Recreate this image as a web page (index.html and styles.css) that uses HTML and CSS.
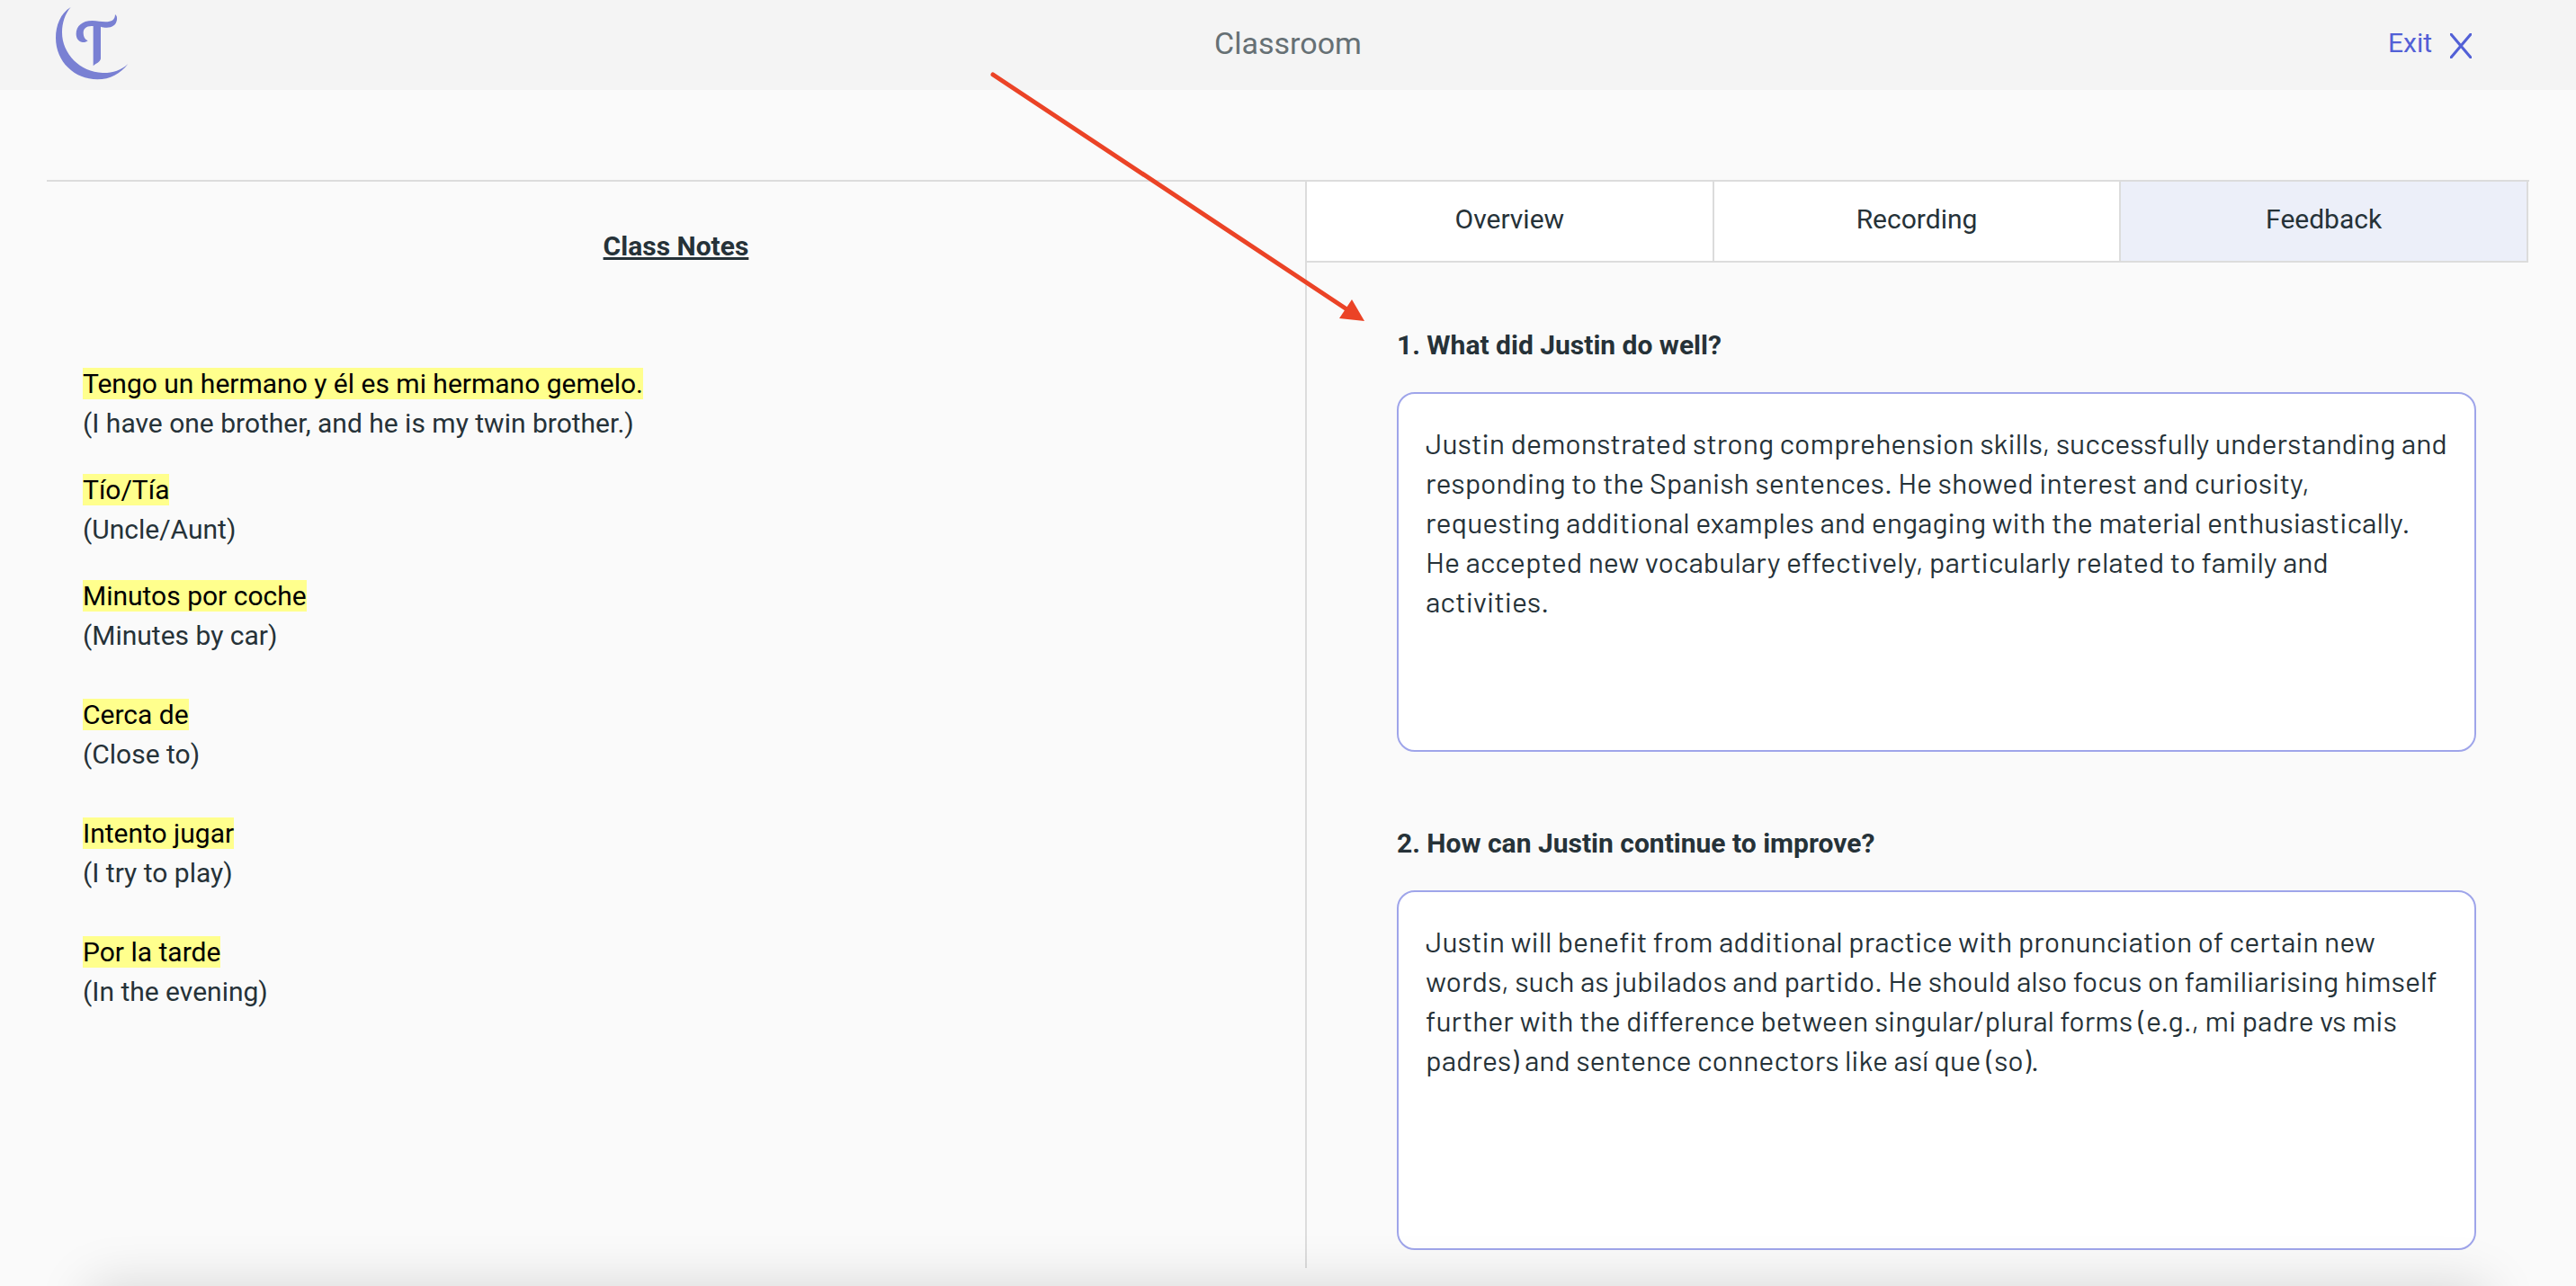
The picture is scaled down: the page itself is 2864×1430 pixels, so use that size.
FILE: index.html
```html
<!DOCTYPE html>
<html lang="en">
<head>
<meta charset="utf-8">
<meta name="viewport" content="width=device-width, initial-scale=1">
<title>Classroom</title>
<link rel="stylesheet" href="styles.css">
</head>
<body>
<header class="topbar">
  <a class="brand" href="#" aria-label="Home">
    <svg class="brand-logo" viewBox="0 0 420 300" aria-hidden="true">
      <path d="M116 24C82 44 66 85 66 127C66 206 129 265 205 265C247 265 282 246 307 213C284 236 252 244 222 243C148 240 87 180 87 108C87 76 97 46 116 24Z"/>
      <path d="M191 220V87C168 85 158 95 158 110C158 122 163 131 173 136C166 142 158 142 152 140C140 136 134 126 134 113C134 88 153 69 188 69C205 69 216 73 232 73C252 73 264 66 264 48C270 52 271 59 270 66C267 84 254 92 236 92C228 92 222 91 216 89V196C214 208 200 211 191 220Z"/>
    </svg>
  </a>
  <h1 class="topbar-title">Classroom</h1>
  <a class="exit" href="#">Exit
    <svg class="exit-icon" viewBox="0 0 24 28" aria-hidden="true"><path d="M1 1L23 27M23 1L1 27"/></svg>
  </a>
</header>

<main class="classroom">
  <section class="notes">
    <h2 class="notes-title">Class Notes</h2>
    <div class="notes-body">
      <p class="note"><mark>Tengo un hermano y él es mi hermano gemelo.</mark><br>(I have one brother, and he is my twin brother.)</p>
      <p class="note"><mark>Tío/Tía</mark><br>(Uncle/Aunt)</p>
      <p class="note"><mark>Minutos por coche</mark><br>(Minutes by car)<br><br><mark>Cerca de</mark><br>(Close to)<br><br><mark>Intento jugar</mark><br>(I try to play)<br><br><mark>Por la tarde</mark><br>(In the evening)</p>
    </div>
  </section>

  <section class="panel">
    <nav class="tabs">
      <button class="tab" type="button">Overview</button>
      <button class="tab" type="button">Recording</button>
      <button class="tab tab-active" type="button">Feedback</button>
    </nav>
    <form class="feedback">
      <div class="question">
        <label for="did-well">1. What did Justin do well?</label>
        <textarea id="did-well">Justin demonstrated strong comprehension skills, successfully understanding and responding to the Spanish sentences. He showed interest and curiosity, requesting additional examples and engaging with the material enthusiastically. He accepted new vocabulary effectively, particularly related to family and activities.</textarea>
      </div>
      <div class="question">
        <label for="improve">2. How can Justin continue to improve?</label>
        <textarea id="improve">Justin will benefit from additional practice with pronunciation of certain new words, such as jubilados and partido. He should also focus on familiarising himself further with the difference between singular/plural forms (e.g., mi padre vs mis padres) and sentence connectors like así que (so).</textarea>
      </div>
    </form>
  </section>
</main>

<svg class="pointer" viewBox="0 0 424 284" aria-hidden="true">
  <path class="pointer-line" d="M7 8L402 270"/>
  <path class="pointer-head" d="M420 282L406 258L392 279Z"/>
</svg>
<div class="bottom-shade"></div>
</body>
</html>
```
FILE: styles.css
```css
* { box-sizing: border-box; }

body {
  margin: 0;
  background: #fafafa;
  color: #263238;
  font-family: Roboto, "Liberation Sans", sans-serif;
  font-size: 30px;
  line-height: 44px;
}

.topbar {
  display: grid;
  grid-template-columns: 1fr auto 1fr;
  align-items: center;
  height: 100px;
  padding: 0 116px 0 40px;
  background: #f4f4f4;
}

.brand { width: 140px; height: 100px; }
.brand-logo { display: block; width: 140px; height: 100px; fill: #7980d3; }

.topbar-title {
  margin: 0 0 4px 76px;
  color: #667074;
  font-size: 34px;
  font-weight: 400;
}

.exit {
  display: flex;
  align-items: center;
  justify-self: end;
  gap: 20px;
  margin-bottom: 4px;
  color: #5260d6;
  text-decoration: none;
}

.exit-icon {
  width: 24px;
  height: 28px;
  margin-top: 6px;
  fill: none;
  stroke: #5260d6;
  stroke-width: 3;
  stroke-linecap: round;
}

.classroom {
  display: grid;
  grid-template-columns: 1401fr 1359fr;
  margin: 100px 52px 0;
  border-top: 2px solid #dcdcdc;
}

.notes { border-right: 2px solid #dcdcdc; }

.notes-title {
  margin: 0;
  padding-top: 50px;
  font-size: 30px;
  font-weight: 700;
  text-align: center;
  text-decoration: underline;
}

.notes-body { padding: 109px 40px 0; }
.note { margin: 0 0 30px; }
.note mark { background: #ffff8d; color: #000; }

.panel { padding-bottom: 20px; }

.tabs {
  display: grid;
  grid-template-columns: repeat(3, 1fr);
  margin-right: 1px;
}

.tab {
  padding: 20px 0 24px;
  border: solid #dcdcdc;
  border-width: 0 2px 2px 0;
  background: #fff;
  color: inherit;
  font: inherit;
}

.tab-active { background: #eceff9; }

.feedback {
  display: grid;
  gap: 80px;
  padding: 70px 59px 0 100px;
}

.question { display: grid; gap: 30px; }
.question label { font-weight: 700; }

.question textarea {
  display: block;
  width: 100%;
  height: 400px;
  margin: 0;
  padding: 32px 30px;
  border: 2px solid #9fa5ea;
  border-radius: 20px;
  background: #fff;
  color: inherit;
  font-family: Barlow, Roboto, sans-serif;
  font-size: 32px;
  line-height: 44px;
  resize: none;
}

.pointer {
  position: absolute;
  top: 75px;
  left: calc(50% - 335px);
  width: 424px;
  height: 284px;
}

.pointer-line { fill: none; stroke: #eb4326; stroke-width: 5; stroke-linecap: round; }
.pointer-head { fill: #eb4326; }

.bottom-shade {
  position: fixed;
  right: 100px;
  bottom: -100px;
  left: 100px;
  height: 100px;
  box-shadow: 0 0 60px rgba(0, 0, 0, .15);
  pointer-events: none;
}
```
